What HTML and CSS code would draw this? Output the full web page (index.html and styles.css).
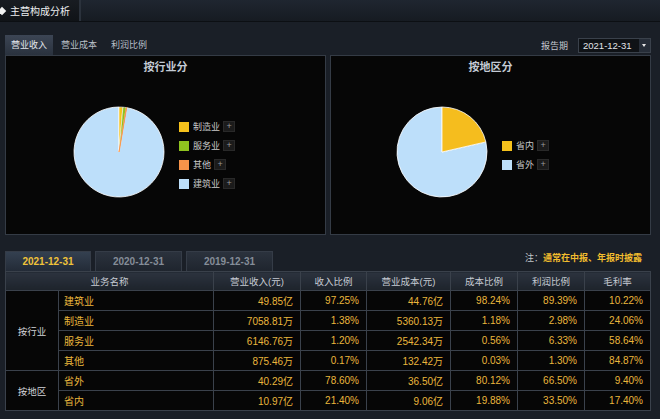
FILE: index.html
```html
<!DOCTYPE html>
<html lang="zh-CN">
<head>
<meta charset="utf-8">
<title>主营构成分析</title>
<link rel="stylesheet" href="styles.css">
</head>
<body>
<div class="page">
  <div class="topbar">
    <div class="maintab"><span class="diamond"></span><span class="maintab-text">主营构成分析</span></div>
    <div class="topbar-rest"></div>
  </div>

  <div class="toolbar">
    <div class="tabs">
      <div class="tab active">营业收入</div>
      <div class="tab">营业成本</div>
      <div class="tab">利润比例</div>
    </div>
    <div class="period">
      <span class="period-label">报告期</span>
      <div class="select"><span class="select-value">2021-12-31</span><span class="select-arrow"></span></div>
    </div>
  </div>

  <div class="panels">
    <div class="panel panel-left">
      <div class="panel-title">按行业分</div>
      <div class="chart">
        <svg class="pie" width="92" height="92" viewBox="0 0 92 92">
          <path d="M46,46 L53.74,1.67 A45,45 0 1 1 46,1 Z" fill="#bddffa" stroke="#ffffff" stroke-width="0.8"/>
          <path d="M46,46 L46,1 A45,45 0 0 1 49.90,1.17 Z" fill="#f6c21c" stroke="#ffffff" stroke-width="0.6"/>
          <path d="M46,46 L49.90,1.17 A45,45 0 0 1 53.26,1.59 Z" fill="#8fc31f" stroke="#ffffff" stroke-width="0.6"/>
          <path d="M46,46 L53.26,1.59 A45,45 0 0 1 53.74,1.67 Z" fill="#f7944a" stroke="#f7944a" stroke-width="0.8"/>
        </svg>
        <ul class="legend">
          <li class="legend-item"><span class="swatch sw-yellow"></span><span class="legend-text">制造业</span><span class="plus">+</span></li>
          <li class="legend-item"><span class="swatch sw-green"></span><span class="legend-text">服务业</span><span class="plus">+</span></li>
          <li class="legend-item"><span class="swatch sw-orange"></span><span class="legend-text">其他</span><span class="plus">+</span></li>
          <li class="legend-item"><span class="swatch sw-blue"></span><span class="legend-text">建筑业</span><span class="plus">+</span></li>
        </ul>
      </div>
    </div>
    <div class="panel panel-right">
      <div class="panel-title">按地区分</div>
      <div class="chart">
        <svg class="pie" width="92" height="92" viewBox="0 0 92 92">
          <path d="M46,46 L89.85,35.91 A45,45 0 1 1 46,1 Z" fill="#bddffa" stroke="#ffffff" stroke-width="0.8"/>
          <path d="M46,46 L46,1 A45,45 0 0 1 89.85,35.91 Z" fill="#f5bd1e" stroke="#ffffff" stroke-width="0.8"/>
        </svg>
        <ul class="legend">
          <li class="legend-item"><span class="swatch sw-yellow"></span><span class="legend-text">省内</span><span class="plus">+</span></li>
          <li class="legend-item"><span class="swatch sw-blue"></span><span class="legend-text">省外</span><span class="plus">+</span></li>
        </ul>
      </div>
    </div>
  </div>

  <div class="datebar">
    <div class="datetabs">
      <div class="datetab active">2021-12-31</div>
      <div class="datetab">2020-12-31</div>
      <div class="datetab">2019-12-31</div>
    </div>
    <div class="note">注：<span class="note-hl">通常在中报、年报时披露</span></div>
  </div>

  <table class="grid">
    <colgroup>
      <col class="c-group"><col class="c-name"><col class="c-rev"><col class="c-rp">
      <col class="c-cost"><col class="c-cp"><col class="c-pp"><col class="c-gm">
    </colgroup>
    <thead>
      <tr>
        <th colspan="2">业务名称</th>
        <th>营业收入(元)</th>
        <th>收入比例</th>
        <th>营业成本(元)</th>
        <th>成本比例</th>
        <th>利润比例</th>
        <th>毛利率</th>
      </tr>
    </thead>
    <tbody>
      <tr>
        <td class="group" rowspan="4">按行业</td>
        <td class="name">建筑业</td><td>49.85亿</td><td>97.25%</td><td>44.76亿</td><td>98.24%</td><td>89.39%</td><td>10.22%</td>
      </tr>
      <tr><td class="name">制造业</td><td>7058.81万</td><td>1.38%</td><td>5360.13万</td><td>1.18%</td><td>2.98%</td><td>24.06%</td></tr>
      <tr><td class="name">服务业</td><td>6146.76万</td><td>1.20%</td><td>2542.34万</td><td>0.56%</td><td>6.33%</td><td>58.64%</td></tr>
      <tr><td class="name">其他</td><td>875.46万</td><td>0.17%</td><td>132.42万</td><td>0.03%</td><td>1.30%</td><td>84.87%</td></tr>
      <tr>
        <td class="group" rowspan="2">按地区</td>
        <td class="name">省外</td><td>40.29亿</td><td>78.60%</td><td>36.50亿</td><td>80.12%</td><td>66.50%</td><td>9.40%</td>
      </tr>
      <tr><td class="name">省内</td><td>10.97亿</td><td>21.40%</td><td>9.06亿</td><td>19.88%</td><td>33.50%</td><td>17.40%</td></tr>
    </tbody>
  </table>
</div>
</body>
</html>
```

FILE: styles.css
```css
* { box-sizing: border-box; }

html, body {
  margin: 0;
  padding: 0;
}

body {
  width: 660px;
  height: 419px;
  overflow: hidden;
  background: #1a1f27;
  font-family: "Liberation Sans", "Noto Sans CJK SC", sans-serif;
  color: #c8ccd2;
}

.page {
  width: 660px;
  height: 419px;
}

/* top bar */
.topbar {
  height: 22px;
  display: flex;
  background: linear-gradient(#1f2630, #161b22);
  border-bottom: 1px solid #0c0f13;
}

.maintab {
  width: 81px;
  display: flex;
  align-items: center;
  gap: 5px;
  background: linear-gradient(#181c22, #101317);
  border-right: 2px solid #2b323c;
}

.diamond {
  width: 6px;
  height: 6px;
  margin-left: -1px;
  background: #f2f2f2;
  transform: rotate(45deg);
}

.maintab-text {
  font-size: 10px;
  color: #eef0f2;
  letter-spacing: 0;
}

.topbar-rest {
  flex: 1;
}

/* toolbar */
.toolbar {
  height: 33px;
  display: flex;
  justify-content: space-between;
  align-items: flex-end;
  padding: 0 9px 0 5px;
}

.tabs {
  display: flex;
  gap: 2px;
}

.tab {
  height: 20px;
  line-height: 20px;
  padding: 0 6px;
  font-size: 9px;
  color: #b9bfc8;
}

.tab.active {
  background: linear-gradient(#3c4554, #2a323e);
  color: #e4e8ee;
}

.period {
  height: 20px;
  display: flex;
  align-items: center;
  gap: 10px;
}

.period-label {
  font-size: 9px;
  color: #c2c6cc;
}

.select {
  width: 73px;
  height: 15px;
  display: flex;
  align-items: stretch;
  border: 1px solid #3a414b;
  background: #0f1216;
}

.select-value {
  flex: 1;
  font-size: 9.5px;
  line-height: 13px;
  padding-left: 4px;
  color: #e2e4e8;
}

.select-arrow {
  width: 11px;
  background: #262d38;
  position: relative;
}

.select-arrow::after {
  content: "";
  position: absolute;
  left: 3px;
  top: 5px;
  border-left: 2.5px solid transparent;
  border-right: 2.5px solid transparent;
  border-top: 3px solid #e8e8e8;
}

/* panels */
.panels {
  display: flex;
  gap: 4px;
  margin: 0 9px 0 5px;
  height: 180px;
}

.panel {
  width: 321px;
  height: 180px;
  background: #060606;
  border: 1px solid #343b45;
}

.panel-title {
  height: 22px;
  line-height: 22px;
  text-align: center;
  font-size: 11px;
  font-weight: bold;
  color: #c3cad4;
}

.chart {
  display: flex;
  align-items: center;
  padding-top: 28px;
}

.panel-left .chart { padding-left: 67px; }
.panel-right .chart { padding-left: 65px; }

.pie {
  display: block;
  flex: none;
}

.legend {
  list-style: none;
  margin: 6px 0 0 14px;
  padding: 0;
}

.legend-item {
  height: 19px;
  display: flex;
  align-items: center;
}

.swatch {
  width: 10px;
  height: 10px;
  margin-right: 4px;
}

.sw-yellow { background: #f6c21c; }
.sw-green { background: #8fc31f; }
.sw-orange { background: #f7944a; }
.sw-blue { background: #bddffa; }

.legend-text {
  font-size: 9px;
  color: #c9c9c9;
}

.plus {
  width: 12px;
  height: 11px;
  margin-left: 3px;
  background: #1b1b1b;
  border: 1px solid #292929;
  color: #9a9a9a;
  font-size: 9px;
  line-height: 9px;
  text-align: center;
}

/* date tabs */
.datebar {
  margin: 16px 10px 0 5px;
  height: 20px;
  display: flex;
  justify-content: space-between;
}

.datetabs {
  display: flex;
  gap: 4px;
}

.datetab {
  width: 87px;
  height: 20px;
  line-height: 19px;
  text-align: center;
  font-size: 10px;
  font-weight: bold;
  color: #858d98;
  background: linear-gradient(#2b323d, #1f252e);
  border: 1px solid #353c47;
  border-bottom: none;
}

.datetab.active {
  width: 86px;
  color: #f0c33a;
  background: linear-gradient(#344050, #232b37);
}

.note {
  font-size: 9px;
  line-height: 14px;
  padding-right: 8px;
  color: #c0c4ca;
}

.note-hl {
  color: #f2bd2e;
  font-weight: bold;
}

/* table */
.grid {
  width: 645px;
  margin-left: 5px;
  border-collapse: collapse;
  table-layout: fixed;
}

.c-group { width: 53px; }
.c-name { width: 155px; }
.c-rev { width: 87px; }
.c-rp { width: 66px; }
.c-cost { width: 84px; }
.c-cp { width: 67px; }
.c-pp { width: 67px; }
.c-gm { width: 66px; }

.grid th {
  height: 19px;
  padding: 0;
  font-size: 9.5px;
  font-weight: normal;
  color: #c6cbd3;
  background: linear-gradient(#2c333e, #1d232b);
  border: 1px solid #3a414b;
  text-align: center;
}

.grid td {
  height: 20px;
  padding: 0 7px;
  font-size: 10px;
  color: #eab63c;
  background: #060606;
  border: 1px solid #3a414b;
  text-align: right;
  white-space: nowrap;
}

.grid td.name {
  text-align: left;
  padding-left: 5px;
}

.grid td.group {
  text-align: center;
  padding: 0;
  color: #d2d4d8;
  font-size: 9.5px;
}
```
